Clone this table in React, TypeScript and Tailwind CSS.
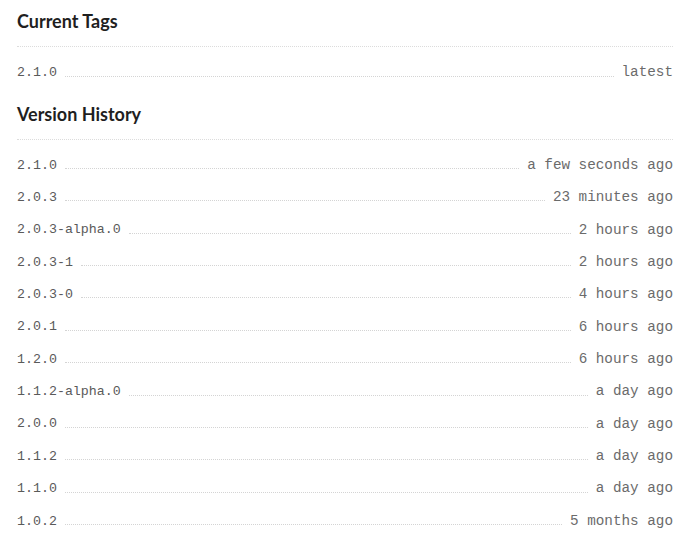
import React from "react";

const tags = [{ version: "2.1.0", label: "latest" }];

const history = [
  { version: "2.1.0", when: "a few seconds ago" },
  { version: "2.0.3", when: "23 minutes ago" },
  { version: "2.0.3-alpha.0", when: "2 hours ago" },
  { version: "2.0.3-1", when: "2 hours ago" },
  { version: "2.0.3-0", when: "4 hours ago" },
  { version: "2.0.1", when: "6 hours ago" },
  { version: "1.2.0", when: "6 hours ago" },
  { version: "1.1.2-alpha.0", when: "a day ago" },
  { version: "2.0.0", when: "a day ago" },
  { version: "1.1.2", when: "a day ago" },
  { version: "1.1.0", when: "a day ago" },
  { version: "1.0.2", when: "5 months ago" },
];

const Row = ({ left, right }: { left: string; right: string }) => (
  <li className="flex h-[32.36px] items-center">
    <span className="text-[13.3px] text-[#5a5a5a]">{left}</span>
    <span className="mx-2 mt-[6px] flex-1 border-b border-dotted border-[#d4d4d4]" />
    <span className="text-[14.3px] text-[#6b6b6b]">{right}</span>
  </li>
);

const Heading = ({ children }: { children: React.ReactNode }) => (
  <h2 className="border-b border-dotted border-[#dcdcdc] pb-[14px] font-['Lato',sans-serif] text-[18px] font-bold leading-[22px] text-[#1f1f1f]">
    {children}
  </h2>
);

export default function App() {
  return (
    <div className="min-h-[542px] bg-white px-[17px] pt-[10px] font-['Liberation_Mono',monospace]">
      <Heading>Current Tags</Heading>
      <ul className="pt-[10px] pb-[10px]">
        {tags.map((t) => (
          <Row key={t.version} left={t.version} right={t.label} />
        ))}
      </ul>
      <div className="pt-[4px]">
        <Heading>Version History</Heading>
      </div>
      <ul className="pt-[9px]">
        {history.map((h) => (
          <Row key={h.version} left={h.version} right={h.when} />
        ))}
      </ul>
    </div>
  );
}
